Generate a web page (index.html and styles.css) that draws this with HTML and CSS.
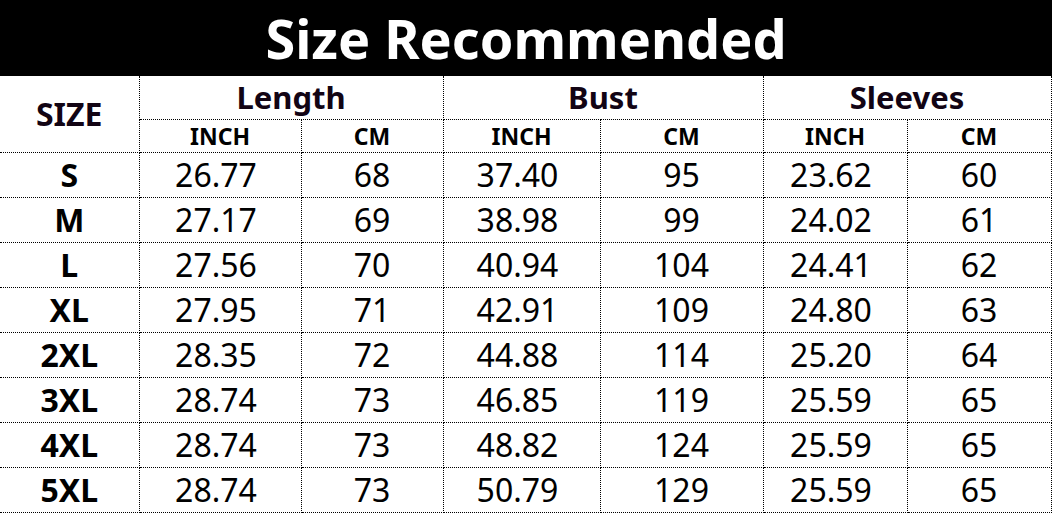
FILE: index.html
```html
<!DOCTYPE html>
<html>
<head>
<meta charset="utf-8">
<link rel="stylesheet" href="styles.css">
</head>
<body>
<div class="chart">
  <div class="title">Size Recommended</div>
  <table class="sizes">
    <colgroup>
      <col class="c-size"><col class="c1"><col class="c2"><col class="c3"><col class="c4"><col class="c5"><col class="c6">
    </colgroup>
    <thead>
      <tr class="group">
        <th rowspan="2" class="size-head">SIZE</th>
        <th colspan="2">Length</th>
        <th colspan="2">Bust</th>
        <th colspan="2">Sleeves</th>
      </tr>
      <tr class="units">
        <th>INCH</th><th>CM</th><th>INCH</th><th>CM</th><th>INCH</th><th>CM</th>
      </tr>
    </thead>
    <tbody>
      <tr><th>S</th><td class="in">26.77</td><td>68</td><td class="in">37.40</td><td>95</td><td class="in">23.62</td><td>60</td></tr>
      <tr><th>M</th><td class="in">27.17</td><td>69</td><td class="in">38.98</td><td>99</td><td class="in">24.02</td><td>61</td></tr>
      <tr><th>L</th><td class="in">27.56</td><td>70</td><td class="in">40.94</td><td>104</td><td class="in">24.41</td><td>62</td></tr>
      <tr><th>XL</th><td class="in">27.95</td><td>71</td><td class="in">42.91</td><td>109</td><td class="in">24.80</td><td>63</td></tr>
      <tr><th>2XL</th><td class="in">28.35</td><td>72</td><td class="in">44.88</td><td>114</td><td class="in">25.20</td><td>64</td></tr>
      <tr><th>3XL</th><td class="in">28.74</td><td>73</td><td class="in">46.85</td><td>119</td><td class="in">25.59</td><td>65</td></tr>
      <tr><th>4XL</th><td class="in">28.74</td><td>73</td><td class="in">48.82</td><td>124</td><td class="in">25.59</td><td>65</td></tr>
      <tr><th>5XL</th><td class="in">28.74</td><td>73</td><td class="in">50.79</td><td>129</td><td class="in">25.59</td><td>65</td></tr>
    </tbody>
  </table>
</div>
</body>
</html>
```
FILE: styles.css
```css
html, body {
  margin: 0;
  padding: 0;
  background: #fff;
}
.chart {
  width: 1052px;
  font-family: "Noto Sans", "Open Sans", sans-serif;
  color: #000;
}
.title {
  height: 76px;
  background: #000;
  color: #fff;
  font-weight: 700;
  font-size: 54px;
  line-height: 76px;
  text-align: center;
}
.sizes {
  width: 1051px;
  border-collapse: collapse;
  table-layout: fixed;
}
.c-size { width: 139px; }
.c1 { width: 162px; }
.c2 { width: 142px; }
.c3 { width: 157px; }
.c4 { width: 163px; }
.c5 { width: 144px; }
.c6 { width: 144px; }
.sizes th, .sizes td {
  border: 1px dotted #000;
  padding: 0;
  text-align: center;
  vertical-align: middle;
}
.sizes tr:first-child th { border-top: none; }
.sizes th:first-child { border-left: none; }
.group th {
  height: 43px;
  font-size: 31px;
  font-weight: 700;
  color: #120414;
  line-height: 1;
}
.group .size-head {
  font-size: 32px;
}
.units th {
  height: 32px;
  font-size: 23px;
  font-weight: 700;
  line-height: 1;
}
tbody tr { height: 45px; }
tbody th {
  font-size: 32px;
  font-weight: 700;
  line-height: 1;
}
tbody td {
  font-size: 32px;
  font-weight: 400;
  line-height: 1;
}
tbody td.in {
  padding-right: 8px;
}
```
